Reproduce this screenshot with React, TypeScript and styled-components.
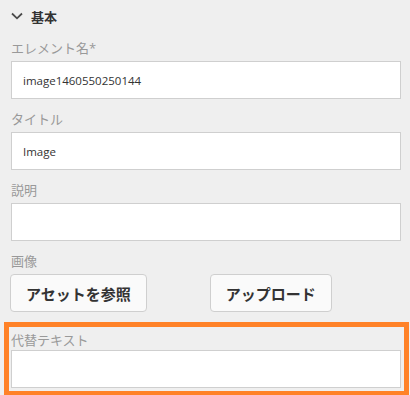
import React from "react";
import styled, { createGlobalStyle } from "styled-components";

const GlobalStyle = createGlobalStyle`
  body {
    margin: 0;
    background: #efefef;
    font-family: "Open Sans", "Noto Sans CJK JP", sans-serif;
  }
`;

const Panel = styled.div`
  width: 410px;
  height: 395px;
  overflow: hidden;
  box-sizing: border-box;
  padding: 0 9px 0 11px;
  background: #efefef;
`;

const SectionHeader = styled.div`
  display: flex;
  align-items: center;
  gap: 8px;
  height: 32px;
  margin-bottom: 6px;
  color: #333;
  font-size: 13px;
  font-weight: 700;
`;

const Chevron = styled.svg`
  width: 12px;
  height: 8px;
  flex: none;
`;

const Field = styled.div`
  display: flex;
  flex-direction: column;
  margin-bottom: 10px;
`;

const Label = styled.label`
  height: 20px;
  line-height: 20px;
  margin-bottom: 3px;
  color: #999;
  font-size: 13px;
`;

const TextInput = styled.div`
  box-sizing: border-box;
  height: 38px;
  display: flex;
  align-items: center;
  padding: 0 11px;
  background: #fff;
  border: 1px solid #cfcfcf;
  color: #333;
  font-size: 11.5px;
`;

const ButtonRow = styled.div`
  display: flex;
  gap: 63px;
  margin-left: -1px;
`;

const Button = styled.button`
  box-sizing: border-box;
  height: 38px;
  padding: 0 15px;
  background: #fafafa;
  border: 1px solid #cfcfcf;
  border-radius: 4px;
  color: #333;
  font-family: "Open Sans", "Noto Sans CJK JP", sans-serif;
  font-size: 15px;
  font-weight: 700;
`;

const Highlight = styled.div`
  margin: 8px -8px 0 -7px;
  padding: 1px 3px 3px 2px;
  border: 5px solid #ff8228;
`;

const fields = [
  { label: "エレメント名*", value: "image1460550250144" },
  { label: "タイトル", value: "Image" },
  { label: "説明", value: "" },
];

export default function App() {
  return (
    <Panel>
      <GlobalStyle />
      <SectionHeader>
        <Chevron viewBox="0 0 12 8">
          <path d="M1 1.5 L6 6.3 L11 1.5" fill="none" stroke="#4b4b4b" strokeWidth="1.8" />
        </Chevron>
        基本
      </SectionHeader>
      {fields.map((f) => (
        <Field key={f.label}>
          <Label>{f.label}</Label>
          <TextInput>{f.value}</TextInput>
        </Field>
      ))}
      <Field>
        <Label>画像</Label>
        <ButtonRow>
          <Button>アセットを参照</Button>
          <Button>アップロード</Button>
        </ButtonRow>
      </Field>
      <Highlight>
        <Label>代替テキスト</Label>
        <TextInput />
      </Highlight>
    </Panel>
  );
}
